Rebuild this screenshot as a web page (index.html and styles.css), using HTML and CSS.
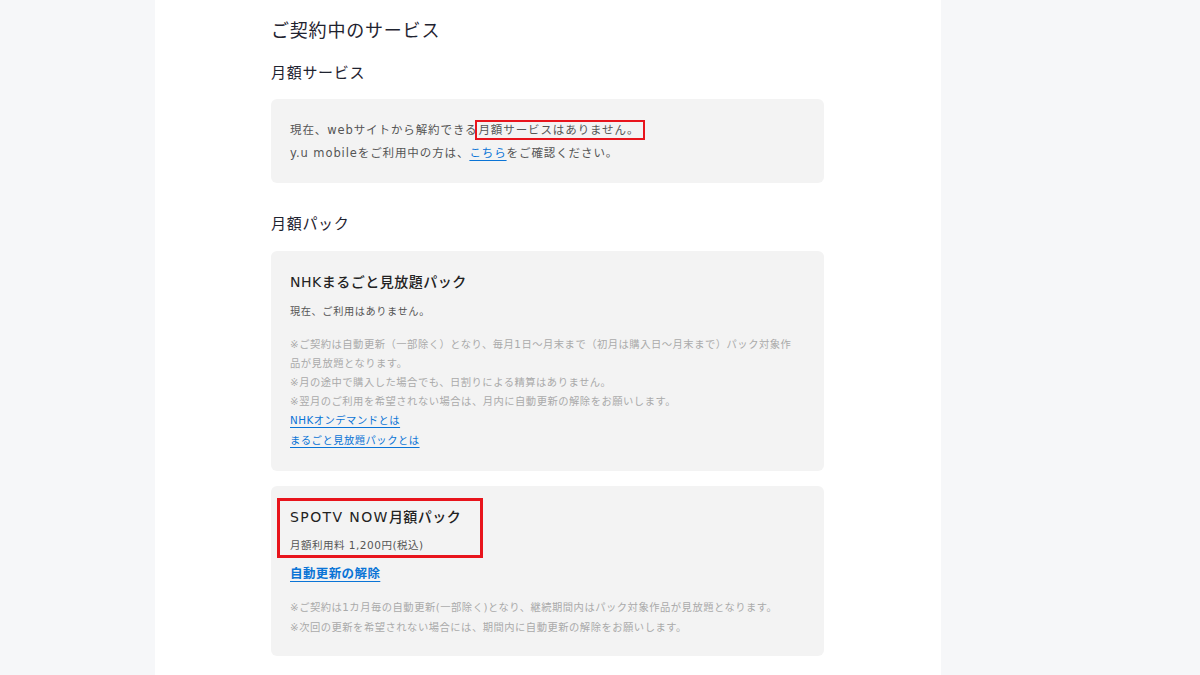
FILE: index.html
```html
<!DOCTYPE html>
<html lang="ja">
<head>
    <meta charset="UTF-8">
    <meta name="viewport" content="width=device-width, initial-scale=1.0">
    <title>ご契約中のサービス</title>
    <link rel="stylesheet" href="styles.css">
</head>
<body>
    <div class="page">
        <div class="main">
            <h1 class="title">ご契約中のサービス</h1>

            <h2 class="subtitle">月額サービス</h2>
            <div class="card card-first">
                <p class="text">現在、webサイトから解約できる<span class="mark">月額サービスはありません。</span></p>
                <p class="text">y.u mobileをご利用中の方は、<a class="link" href="#">こちら</a>をご確認ください。</p>
            </div>

            <h2 class="subtitle subtitle-pack">月額パック</h2>
            <div class="card card-nhk">
                <div class="pack-name">NHKまるごと見放題パック</div>
                <p class="status">現在、ご利用はありません。</p>
                <div class="notes">
                    <p>※ご契約は自動更新（一部除く）となり、毎月1日～月末まで（初月は購入日～月末まで）パック対象作<br>品が見放題となります。</p>
                    <p>※月の途中で購入した場合でも、日割りによる精算はありません。</p>
                    <p>※翌月のご利用を希望されない場合は、月内に自動更新の解除をお願いします。</p>
                    <p><a class="link" href="#">NHKオンデマンドとは</a></p>
                    <p><a class="link" href="#">まるごと見放題パックとは</a></p>
                </div>
            </div>

            <div class="card card-spotv">
                <div class="mark-box">
                    <div class="pack-name"><span class="latin">SPOTV NOW</span>月額パック</div>
                    <p class="price">月額利用料 1,200円(税込)</p>
                </div>
                <div class="action">
                    <a class="link link-strong" href="#">自動更新の解除</a>
                </div>
                <div class="notes notes-spotv">
                    <p>※ご契約は1カ月毎の自動更新(一部除く)となり、継続期間内はパック対象作品が見放題となります。</p>
                    <p>※次回の更新を希望されない場合には、期間内に自動更新の解除をお願いします。</p>
                </div>
            </div>
        </div>
    </div>
</body>
</html>
```

FILE: styles.css
```css
* {
    margin: 0;
    padding: 0;
    box-sizing: border-box;
}
html, body {
    height: 100%;
}
body {
    background: #f6f7f9;
    font-family: "DejaVu Sans", "Noto Sans CJK JP", sans-serif;
    color: #555;
    overflow: hidden;
}
.page {
    width: 786px;
    margin-left: 155px;
    min-height: 100%;
    background: #fff;
}
.main {
    width: 553px;
    margin-left: 116px;
    padding-top: 16px;
}
.title {
    font-size: 18px;
    font-weight: 400;
    letter-spacing: 0.8px;
    line-height: 30px;
    color: #1f2330;
}
.subtitle {
    font-size: 15px;
    font-weight: 400;
    letter-spacing: 0.7px;
    line-height: 24px;
    color: #1f2330;
    margin-top: 15px;
}
.subtitle-pack {
    margin-top: 29px;
}
.card {
    background: #f3f3f3;
    border-radius: 6px;
    padding: 19px 16px 21px 19px;
    margin-top: 15px;
}
.card-first {
    margin-top: 14px;
    padding: 19.5px 16px 18.5px 19px;
}
.text {
    font-size: 11.5px;
    letter-spacing: 0.9px;
    line-height: 23px;
    color: #555;
}
.mark {
    outline: 2px solid #e8141c;
    padding: 1px 4px 1px 1px;
}
.link {
    color: #0a74d6;
    text-decoration: underline;
    text-underline-offset: 3px;
}
.pack-name {
    font-size: 14px;
    font-weight: 500;
    letter-spacing: 0.5px;
    line-height: 24px;
    color: #222;
}
.latin {
    letter-spacing: 1.4px;
}
.status {
    margin-top: 5.5px;
    font-size: 10.2px;
    letter-spacing: 0.6px;
    line-height: 23px;
    color: #555;
}
.notes {
    margin-top: 12px;
    font-size: 10.3px;
    letter-spacing: 0.5px;
    line-height: 19.2px;
    color: #aaa;
}
.card-spotv {
    padding-top: 12px;
    padding-bottom: 19px;
}
.mark-box {
    display: inline-block;
    border: 3px solid #e8141c;
    margin-left: -13px;
    padding: 4px 19px 0 10px;
}
.price {
    margin-top: 6px;
    font-size: 10.5px;
    letter-spacing: 0.5px;
    line-height: 20px;
    color: #555;
}
.action {
    margin-top: 4px;
    line-height: 22px;
}
.link-strong {
    font-size: 12.5px;
    font-weight: 700;
    letter-spacing: 0.4px;
}
.notes-spotv {
    margin-top: 12px;
    line-height: 20px;
}
```
